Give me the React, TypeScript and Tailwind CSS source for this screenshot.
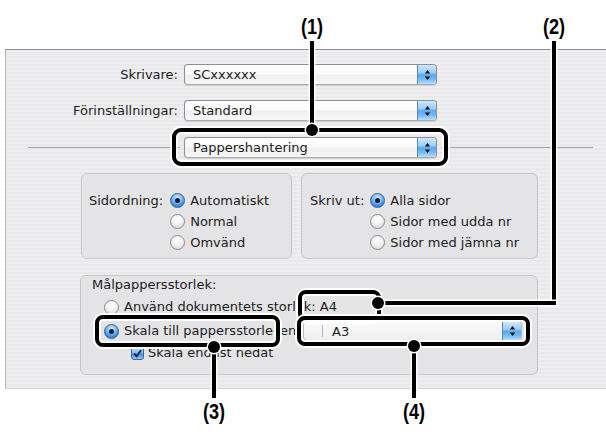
import React from "react";

function Arrows() {
  return (
    <svg width="7" height="12" viewBox="0 0 7 12">
      <polygon points="3.5,1 6.2,4.6 0.8,4.6" fill="#111" />
      <polygon points="0.8,7.4 6.2,7.4 3.5,11" fill="#111" />
    </svg>
  );
}

function Stepper() {
  return (
    <div className="w-[19px] h-full shrink-0 rounded-r-[4px] border-l border-[#5a86b8] bg-[linear-gradient(to_bottom,#cde8fd_0%,#9ccdf7_40%,#5ba7ee_52%,#74b9f4_75%,#b5e0ff_100%)] flex items-center justify-center">
      <Arrows />
    </div>
  );
}

function AquaSelect({ text, w }: { text: string; w: string }) {
  return (
    <div
      className={`${w} h-[21px] shrink-0 flex items-stretch rounded-[4px] border border-[#8f8f8f] border-b-[#a9a9a9] bg-[linear-gradient(to_bottom,#ffffff_0%,#fbfbfb_45%,#efefef_55%,#f7f7f7_100%)] shadow-[0_1px_1px_rgba(0,0,0,0.12)]`}
    >
      <div className="flex-1 flex items-center pl-[8px] leading-none">{text}</div>
      <Stepper />
    </div>
  );
}

function Radio({ on }: { on?: boolean }) {
  if (on) {
    return (
      <div className="w-[15px] h-[15px] shrink-0 rounded-full border border-[#3b5f8f] bg-[radial-gradient(circle_at_50%_30%,#d4ecff_0%,#7dbcf4_40%,#2f84de_75%,#3a8ee6_100%)] flex items-center justify-center">
        <div className="w-[5px] h-[5px] rounded-full bg-[#0d1c33]" />
      </div>
    );
  }
  return (
    <div className="w-[15px] h-[15px] shrink-0 rounded-full border border-[#8a8a8a] bg-[radial-gradient(circle_at_50%_25%,#ffffff_0%,#f4f4f4_45%,#d2d2d2_100%)]" />
  );
}

function Check() {
  return (
    <div className="w-[13px] h-[13px] shrink-0 rounded-[3px] border border-[#3f6396] bg-[linear-gradient(to_bottom,#bfe1fc_0%,#7ab9f2_45%,#3f92e6_55%,#8ccaf7_100%)] flex items-center justify-center">
      <svg width="9" height="9" viewBox="0 0 9 9">
        <path d="M1.2 4.6 L3.6 7.4 L8 1.2" stroke="#0d1c33" strokeWidth="1.8" fill="none" />
      </svg>
    </div>
  );
}

function RadioRow({ on, label }: { on?: boolean; label: string }) {
  return (
    <div className="h-[21px] flex items-center gap-[5px] whitespace-nowrap">
      <Radio on={on} />
      <span>{label}</span>
    </div>
  );
}

function Tag({ text, x, y }: { text: string; x: string; y: string }) {
  return (
    <div
      className={`absolute ${x} ${y} w-[40px] text-center font-['Liberation_Sans',sans-serif] font-bold text-[22px] leading-[24px] text-black scale-x-[0.82]`}
    >
      {text}
    </div>
  );
}

export default function App() {
  return (
    <div className="relative w-[606px] h-[438px] bg-white overflow-hidden text-[13px] text-[#1c1c1c] font-['DejaVu_Sans',sans-serif]">
      <div className="pt-[49px] pl-[5px]">
        <div className="h-[340px] border-t border-l border-b border-t-[#8d8d8d] border-l-[#b4b4b4] border-b-[#d4d4d8] bg-[repeating-linear-gradient(to_bottom,#eeeef1_0px,#eeeef1_2px,#e9e9ec_2px,#e9e9ec_4px)] flex flex-col pt-[14px]">
          {/* Skrivare */}
          <div className="flex items-center">
            <div className="w-[172px] text-right">Skrivare:</div>
            <div className="ml-[6px]">
              <AquaSelect text="SCxxxxxx" w="w-[253px]" />
            </div>
          </div>
          {/* Förinställningar */}
          <div className="flex items-center mt-[15px]">
            <div className="w-[172px] text-right">Förinställningar:</div>
            <div className="ml-[6px]">
              <AquaSelect text="Standard" w="w-[253px]" />
            </div>
          </div>
          {/* Pappershantering */}
          <div className="flex items-center mt-[16px]">
            <div className="ml-[22px] w-[152px] h-px bg-[#a3a3a6]" />
            <div className="ml-[4px]">
              <AquaSelect text="Pappershantering" w="w-[253px]" />
            </div>
            <div className="ml-[4px] w-[152px] h-px bg-[#a3a3a6]" />
          </div>
          {/* Group boxes */}
          <div className="flex mt-[15px] pl-[75px] gap-[9px]">
            <div className="w-[211px] h-[86px] rounded-[6px] border border-[#c6c6ca] bg-[#e4e4e7] flex pl-[7px] pt-[16px]">
              <div className="h-[21px] flex items-center">Sidordning:</div>
              <div className="ml-[7px] flex flex-col">
                <RadioRow on label="Automatiskt" />
                <RadioRow label="Normal" />
                <RadioRow label="Omvänd" />
              </div>
            </div>
            <div className="w-[237px] h-[86px] rounded-[6px] border border-[#c6c6ca] bg-[#e4e4e7] flex pl-[8px] pt-[16px]">
              <div className="h-[21px] flex items-center">Skriv ut:</div>
              <div className="ml-[6px] flex flex-col">
                <RadioRow on label="Alla sidor" />
                <RadioRow label="Sidor med udda nr" />
                <RadioRow label="Sidor med jämna nr" />
              </div>
            </div>
          </div>
          {/* Lower box */}
          <div className="mt-[16px] ml-[74px] w-[458px] h-[100px] rounded-[6px] border border-[#c6c6ca] bg-[#e4e4e7] flex flex-col">
            <div className="h-[18px] flex items-center pl-[11px]">Målpappersstorlek:</div>
            <div className="mt-[2px] h-[22px] flex items-center pl-[23px] gap-[5px] whitespace-nowrap">
              <Radio />
              <span>Använd dokumentets storlek: A4</span>
            </div>
            <div className="mt-[2px] h-[22px] flex items-center">
              <div className="w-[222px] shrink-0 flex items-center pl-[23px] gap-[5px] whitespace-nowrap">
                <Radio on />
                <span>Skala till pappersstorleken:</span>
              </div>
              <div className="w-[219px] h-[20px] flex items-stretch rounded-[4px] border border-[#b9b9bd] bg-[linear-gradient(to_bottom,#fafafa,#eeeef0)]">
                <div className="w-[19px] border-r border-[#b7b7b7] my-[3px]" />
                <div className="flex-1 flex items-center pl-[9px] leading-none">A3</div>
                <Stepper />
              </div>
            </div>
            <div className="mt-[1px] h-[20px] flex items-center pl-[50px] gap-[4px] whitespace-nowrap">
              <Check />
              <span>Skala endast nedåt</span>
            </div>
          </div>
        </div>
      </div>

      {/* Annotation labels */}
      <Tag text="(1)" x="left-[292px]" y="top-[15px]" />
      <Tag text="(2)" x="left-[534px]" y="top-[15px]" />
      <Tag text="(3)" x="left-[194px]" y="top-[400px]" />
      <Tag text="(4)" x="left-[394px]" y="top-[400px]" />

      {/* lines */}
      <div className="absolute left-[310px] top-[41px] w-[4px] h-[89px] bg-black shadow-[0_0_0_1.5px_#fff]" />
      <div className="absolute left-[552px] top-[41px] w-[4px] h-[264px] bg-black shadow-[0_0_0_1.5px_#fff]" />
      <div className="absolute left-[378px] top-[301px] w-[178px] h-[4px] bg-black shadow-[0_0_0_1.5px_#fff]" />
      <div className="absolute left-[212px] top-[347px] w-[4px] h-[51px] bg-black shadow-[0_0_0_1.5px_#fff]" />
      <div className="absolute left-[412px] top-[345px] w-[4px] h-[53px] bg-black shadow-[0_0_0_1.5px_#fff]" />

      {/* callout boxes */}
      <div className="absolute left-[172px] top-[128px] w-[276px] h-[38px] rounded-[9px] border-4 border-black shadow-[0_0_0_2px_#fff,inset_0_0_0_2px_#fff]" />
      <div className="absolute left-[298px] top-[290px] w-[83px] h-[32px] rounded-[8px] border-4 border-black shadow-[0_0_0_2px_#fff,inset_0_0_0_2px_#fff]" />
      <div className="absolute left-[297px] top-[316px] w-[233px] h-[30px] rounded-[8px] border-4 border-black shadow-[0_0_0_2px_#fff,inset_0_0_0_2px_#fff]" />
      <div className="absolute left-[95px] top-[315px] w-[185px] h-[32px] rounded-[8px] border-4 border-black shadow-[0_0_0_2px_#fff,inset_0_0_0_2px_#fff]" />

      {/* dots */}
      <div className="absolute left-[306px] top-[124px] w-[12px] h-[12px] rounded-full bg-black shadow-[0_0_0_1.5px_#fff]" />
      <div className="absolute left-[372px] top-[297px] w-[12px] h-[12px] rounded-full bg-black shadow-[0_0_0_1.5px_#fff]" />
      <div className="absolute left-[208px] top-[341px] w-[12px] h-[12px] rounded-full bg-black shadow-[0_0_0_1.5px_#fff]" />
      <div className="absolute left-[408px] top-[340px] w-[12px] h-[12px] rounded-full bg-black shadow-[0_0_0_1.5px_#fff]" />
    </div>
  );
}
